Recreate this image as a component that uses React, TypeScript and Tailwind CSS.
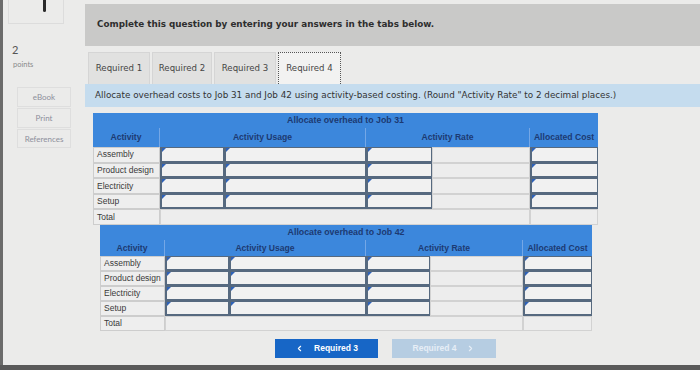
import { ChevronLeft, ChevronRight } from "lucide-react";

const rows = ["Assembly", "Product design", "Electricity", "Setup"];

function InputCell() {
  return (
    <div className="relative bg-[#f1f1f1] border-t border-r border-l-2 border-b-2 border-[#56697f]">
      <span className="absolute left-0 top-0 w-0 h-0 border-t-[4px] border-r-[4px] border-t-[#2f62b8] border-r-transparent" />
    </div>
  );
}

function PlainCell({ span }: { span?: boolean }) {
  return <div className={span ? "col-span-4 bg-[#ededed] border border-[#d2d2d2]" : "bg-[#ededed] border border-[#d2d2d2]"} />;
}

function LabelCell({ text }: { text: string }) {
  return (
    <div className="bg-[#eeeeee] border border-[#cdcdcd] pl-[3px] flex items-center text-[8.5px] text-[#3a3a3a] whitespace-nowrap">
      {text}
    </div>
  );
}

function OverheadTable({
  title,
  wrap,
  cols,
  head2,
  rowH,
}: {
  title: string;
  wrap: string;
  cols: string;
  head2: string;
  rowH: string;
}) {
  return (
    <div className={wrap} style={{ fontFamily: '"Liberation Sans", Arial, sans-serif' }}>
      <div className="bg-[#3c87dc] h-[15px] flex items-center justify-center text-[8.8px] font-bold text-[#1c3a72]">
        {title}
      </div>
      <div className={`grid ${cols} ${head2} bg-[#3c87dc] text-[8.6px] font-bold text-[#1c3a72]`}>
        <div className="flex items-center justify-center border-r border-[#74a7e6]">Activity</div>
        <div className="col-span-2 flex items-center justify-center border-r border-[#74a7e6]">Activity Usage</div>
        <div className="col-span-2 flex items-center justify-center border-r border-[#74a7e6]">Activity Rate</div>
        <div className="flex items-center justify-center">Allocated Cost</div>
      </div>
      {rows.map((r) => (
        <div key={r} className={`grid ${cols} ${rowH}`}>
          <LabelCell text={r} />
          <InputCell />
          <InputCell />
          <InputCell />
          <PlainCell />
          <InputCell />
        </div>
      ))}
      <div className={`grid ${cols} ${rowH}`}>
        <LabelCell text="Total" />
        <PlainCell span />
        <PlainCell />
      </div>
    </div>
  );
}

export default function App() {
  return (
    <div className="w-[700px] h-[370px] bg-[#ebebea] flex flex-col overflow-hidden">
      <div className="flex flex-1 border-l-[3px] border-[#6b6b6b]">
        {/* sidebar */}
        <div className="w-[82px] flex flex-col" style={{ fontFamily: "Lato, sans-serif" }}>
          <div className="ml-[5px] w-[56px] h-[24px] border border-t-0 border-[#dcdcdc] relative">
            <span className="absolute left-[34px] top-0 w-[3px] h-[12px] rounded-b-full bg-[#2a2a2a]" />
          </div>
          <div className="ml-[9px] mt-[20px] text-[11px] leading-[12px] text-[#555]">2</div>
          <div className="ml-[10px] mt-[3px] text-[7.5px] text-[#8a8a8a]">points</div>
          <div className="ml-[14px] mt-[17px] w-[54px] flex flex-col gap-[1px] text-[8px] text-[#8d8f9c]">
            <div className="h-[20px] border border-[#dedede] flex items-center justify-center">eBook</div>
            <div className="h-[20px] border border-[#dedede] flex items-center justify-center">Print</div>
            <div className="h-[19px] border border-[#dedede] flex items-center justify-center">References</div>
          </div>
        </div>

        {/* main */}
        <div className="flex-1 flex flex-col pt-[4px]" style={{ fontFamily: '"DejaVu Sans", Verdana, sans-serif' }}>
          <div className="h-[42px] bg-[#c9c9c8] flex items-center pl-[12px] text-[8.8px] font-bold text-[#2e2e2e]">
            Complete this question by entering your answers in the tabs below.
          </div>
          <div className="mt-[6px] h-[32px] flex gap-[2px] pl-[3px] text-[8.6px] text-[#454545]">
            <div className="w-[62px] bg-[#e1e1e0] border border-[#d5d5d5] border-b-0 flex items-center justify-center">Required 1</div>
            <div className="w-[60px] bg-[#e1e1e0] border border-[#d5d5d5] border-b-0 flex items-center justify-center">Required 2</div>
            <div className="w-[62px] bg-[#e1e1e0] border border-[#d5d5d5] border-b-0 flex items-center justify-center">Required 3</div>
            <div className="w-[63px] bg-[#f2f2f1] border border-dotted border-[#555] border-b-0 flex items-center justify-center">Required 4</div>
          </div>
          <div className="h-[23px] bg-[#c5dcee] flex items-center pl-[10px] text-[8.8px] text-[#333] whitespace-nowrap">
            Allocate overhead costs to Job 31 and Job 42 using activity-based costing. (Round "Activity Rate" to 2 decimal places.)
          </div>

          <OverheadTable
            title="Allocate overhead to Job 31"
            wrap="mt-[6px] ml-[8px] w-[505px]"
            cols="grid-cols-[67px_64px_142px_66px_98px_68px]"
            head2="h-[19px]"
            rowH="h-[15.6px]"
          />
          <OverheadTable
            title="Allocate overhead to Job 42"
            wrap="ml-[15px] w-[492px]"
            cols="grid-cols-[65px_64px_137px_64px_93px_69px]"
            head2="h-[16px]"
            rowH="h-[15px]"
          />

          <div className="mt-[8px] ml-[190px] flex gap-[14px] text-[8.5px] font-bold" style={{ fontFamily: '"Liberation Sans", Arial, sans-serif' }}>
            <div className="w-[103px] h-[19px] bg-[#1766c6] text-white flex items-center justify-center gap-[10px]">
              <ChevronLeft size={9} strokeWidth={3} />
              <span>Required 3</span>
            </div>
            <div className="w-[104px] h-[19px] bg-[#b6cde2] text-[#e6eef6] flex items-center justify-center gap-[10px]">
              <span>Required 4</span>
              <ChevronRight size={9} strokeWidth={3} />
            </div>
          </div>
        </div>
      </div>
      <div className="h-[5px] bg-[#5a5a5a]" />
    </div>
  );
}
